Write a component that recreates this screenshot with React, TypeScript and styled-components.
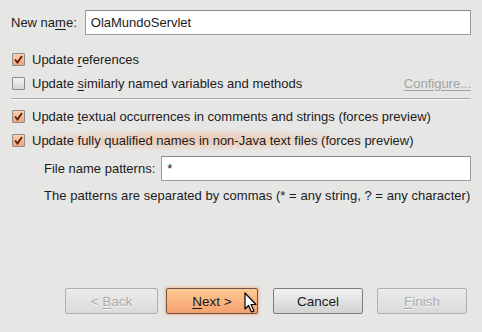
import React from "react";
import styled, { createGlobalStyle, css } from "styled-components";

const GlobalStyle = createGlobalStyle`
  html, body {
    margin: 0;
    padding: 0;
    background: #e6e6e5;
  }
  body {
    font-family: "Liberation Sans", Arial, sans-serif;
    font-size: 13px;
    color: #1c1c1c;
  }
`;

const StyledDialog = styled.div`
  position: relative;
  width: 482px;
  height: 332px;
  box-sizing: border-box;
  padding: 10px 11px 18px 11px;
  display: flex;
  flex-direction: column;
  background: #e6e6e5;
`;

const StyledNameRow = styled.div`
  display: flex;
  align-items: center;
  height: 25px;
`;

const StyledLabel = styled.span`
  white-space: nowrap;
`;

const StyledField = styled.div<{ $left: number }>`
  margin-left: ${(p) => p.$left}px;
  flex: 1;
  height: 25px;
  box-sizing: border-box;
  border: 1px solid #9c9c9c;
  border-top-color: #8a8a8a;
  background: #ffffff;
  display: flex;
  align-items: center;
  padding-left: 5px;
  color: #1a1a1a;
  border-radius: 1px;
`;

const StyledOptions = styled.div`
  margin-top: 12px;
  display: flex;
  flex-direction: column;
`;

const StyledCheckRow = styled.div<{ $glow?: boolean }>`
  display: flex;
  align-items: center;
  height: 24px;
  padding-left: 1px;
  ${(p) =>
    p.$glow &&
    css`
      background: radial-gradient(
        ellipse 190px 11px at 175px 50%,
        rgba(246, 170, 120, 0.5),
        rgba(246, 170, 120, 0.2) 70%,
        rgba(246, 170, 120, 0) 100%
      );
    `}
`;

const StyledBox = styled.span<{ $checked?: boolean }>`
  width: 13px;
  height: 13px;
  box-sizing: border-box;
  border: 1px solid #8c8c8c;
  border-radius: 1px;
  margin-right: 7px;
  flex: none;
  display: flex;
  align-items: center;
  justify-content: center;
  background: ${(p) =>
    p.$checked
      ? "linear-gradient(#fbd2b0, #f2a476)"
      : "linear-gradient(#f4f4f4, #d4d4d4)"};
`;

const StyledCheckText = styled.span`
  flex: 1;
  white-space: nowrap;
`;

const StyledLink = styled.span`
  color: #a3a3a3;
  text-decoration: underline;
  text-underline-offset: 2px;
`;

const StyledSeparator = styled.div`
  height: 1px;
  background: #a8a8a8;
  margin: 3px 0 5px 0;
  box-shadow: 0 1px 0 #f6f6f6;
`;

const StyledPatternBlock = styled.div`
  padding-left: 33px;
  display: flex;
  flex-direction: column;
`;

const StyledPatternRow = styled.div`
  display: flex;
  align-items: center;
  height: 25px;
  margin-top: 4px;
`;

const StyledHint = styled.div`
  height: 20px;
  margin-top: 4px;
  display: flex;
  align-items: center;
  white-space: nowrap;
  letter-spacing: 0.04px;
`;

const StyledButtons = styled.div`
  margin-top: auto;
  display: flex;
  justify-content: flex-end;
  padding-right: 4px;
`;

const StyledButton = styled.div<{ $width: number; $gap: number; $variant: "default" | "disabled" | "hot" }>`
  width: ${(p) => p.$width}px;
  height: 26px;
  margin-left: ${(p) => p.$gap}px;
  box-sizing: border-box;
  border-radius: 2px;
  display: flex;
  align-items: center;
  justify-content: center;
  font-size: 13.5px;
  ${(p) =>
    p.$variant === "default" &&
    css`
      border: 1px solid #7e7e7e;
      background: linear-gradient(#f2f2f2, #d2d2d2);
      color: #1a1a1a;
    `}
  ${(p) =>
    p.$variant === "disabled" &&
    css`
      border: 1px solid #b0b0b0;
      background: linear-gradient(#ececec, #dadada);
      color: #ababab;
      text-shadow: 0 1px 0 #f8f8f8;
    `}
  ${(p) =>
    p.$variant === "hot" &&
    css`
      border: 1px solid #6a5548;
      background: linear-gradient(#fdca92, #f5a070);
      color: #1a1a1a;
      box-shadow: 0 0 3px 1px rgba(245, 150, 90, 0.55);
    `}
`;

const StyledCursor = styled.svg`
  position: absolute;
  left: 244px;
  top: 292px;
`;

const U = styled.span`
  text-decoration: underline;
  text-underline-offset: 2px;
`;

const Check: React.FC = () => (
  <svg width="9" height="9" viewBox="0 0 9 9">
    <path d="M1 4.5 L3.5 7.5 L8 1" fill="none" stroke="#5a1a08" strokeWidth="1.8" />
  </svg>
);

const CheckRow: React.FC<{ checked?: boolean; glow?: boolean; children: React.ReactNode; extra?: React.ReactNode }> = ({
  checked,
  glow,
  children,
  extra,
}) => (
  <StyledCheckRow $glow={glow}>
    <StyledBox $checked={checked}>{checked && <Check />}</StyledBox>
    <StyledCheckText>{children}</StyledCheckText>
    {extra}
  </StyledCheckRow>
);

export default function App() {
  return (
    <>
      <GlobalStyle />
      <StyledDialog>
        <StyledNameRow>
          <StyledLabel>
            New na<U>m</U>e:
          </StyledLabel>
          <StyledField $left={8}>OlaMundoServlet</StyledField>
        </StyledNameRow>
        <StyledOptions>
          <CheckRow checked>
            Update <U>r</U>eferences
          </CheckRow>
          <CheckRow extra={<StyledLink>Configure...</StyledLink>}>
            Update <U>s</U>imilarly named variables and methods
          </CheckRow>
          <StyledSeparator />
          <CheckRow checked>
            Update <U>t</U>extual occurrences in comments and strings (forces preview)
          </CheckRow>
          <CheckRow checked glow>
            Update fully qualified names in non-Java text files (forces preview)
          </CheckRow>
          <StyledPatternBlock>
            <StyledPatternRow>
              <StyledLabel>File name patterns:</StyledLabel>
              <StyledField $left={6}>*</StyledField>
            </StyledPatternRow>
            <StyledHint>The patterns are separated by commas (* = any string, ? = any character)</StyledHint>
          </StyledPatternBlock>
        </StyledOptions>
        <StyledButtons>
          <StyledButton $width={93} $gap={0} $variant="disabled">
            &lt;&nbsp;<U>B</U>ack
          </StyledButton>
          <StyledButton $width={92} $gap={8} $variant="hot">
            <U>N</U>ext &gt;
          </StyledButton>
          <StyledButton $width={90} $gap={15} $variant="default">
            Cancel
          </StyledButton>
          <StyledButton $width={90} $gap={14} $variant="disabled">
            <U>F</U>inish
          </StyledButton>
        </StyledButtons>
        <StyledCursor width="14" height="22" viewBox="0 0 14 22">
          <path
            d="M1 1 L1 17 L4.5 13.5 L7.5 20 L10 19 L7 12.5 L12 12.5 Z"
            fill="#ffffff"
            stroke="#000000"
            strokeWidth="1.2"
            strokeLinejoin="round"
          />
        </StyledCursor>
      </StyledDialog>
    </>
  );
}
